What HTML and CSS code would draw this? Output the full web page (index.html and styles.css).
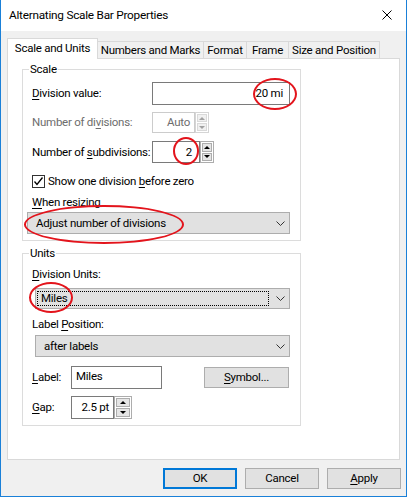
FILE: index.html
```html
<!DOCTYPE html>
<html>
<head>
<meta charset="utf-8">
<link rel="stylesheet" href="styles.css">
</head>
<body>
<div class="window">
  <div class="titlebar">
    <span class="title">Alternating Scale Bar Properties</span>
    <svg class="close" width="10" height="10" viewBox="0 0 10 10"><path d="M0.5 0.5 L9.5 9.5 M9.5 0.5 L0.5 9.5" stroke="#000" stroke-width="1" fill="none"/></svg>
  </div>
  <div class="client">
    <div class="tabs">
      <div class="tab active t1">Scale and Units</div>
      <div class="tab t2">Numbers and Marks</div>
      <div class="tab t3">Format</div>
      <div class="tab t4">Frame</div>
      <div class="tab t5">Size and Position</div>
    </div>
    <div class="panel">
      <fieldset class="group scale">
        <legend>Scale</legend>
        <div class="row r1">
          <label class="lbl"><u>D</u>ivision value:</label>
          <div class="edit wide">20 mi</div>
        </div>
        <div class="row r2">
          <label class="lbl disabled">Number of di<u>v</u>isions:</label>
          <div class="spinner">
            <div class="edit sp-edit e-dis">Auto</div>
            <div class="spin s-dis">
              <div class="sbtn"><span class="tri up"></span></div>
              <div class="sbtn"><span class="tri down"></span></div>
            </div>
          </div>
        </div>
        <div class="row r3">
          <label class="lbl">Number of <u>s</u>ubdivisions:</label>
          <div class="spinner">
            <div class="edit sp-edit e-sub">2</div>
            <div class="spin s-sub">
              <div class="sbtn"><span class="tri up"></span></div>
              <div class="sbtn"><span class="tri down"></span></div>
            </div>
          </div>
        </div>
        <div class="row r4">
          <span class="checkbox"><svg width="11" height="11" viewBox="0 0 11 11"><path d="M1.5 5.5 L4 8.5 L9.5 1.5" stroke="#000" stroke-width="1.3" fill="none"/></svg></span>
          <span class="cb-text">Show one division <u>b</u>efore zero</span>
        </div>
        <div class="line r5"><u>W</u>hen resizing</div>
        <div class="combo c1">
          <span>Adjust number of divisions</span>
          <svg class="chev" width="9" height="5" viewBox="0 0 9 5"><path d="M0.5 0.5 L4.5 4.5 L8.5 0.5" stroke="#333" stroke-width="1" fill="none"/></svg>
        </div>
      </fieldset>

      <fieldset class="group units">
        <legend>Units</legend>
        <div class="line u1"><u>D</u>ivision Units:</div>
        <div class="combo c2">
          <span class="focus">Miles</span>
          <svg class="chev" width="9" height="5" viewBox="0 0 9 5"><path d="M0.5 0.5 L4.5 4.5 L8.5 0.5" stroke="#333" stroke-width="1" fill="none"/></svg>
        </div>
        <div class="line u2">Label <u>P</u>osition:</div>
        <div class="combo c3">
          <span>after labels</span>
          <svg class="chev" width="9" height="5" viewBox="0 0 9 5"><path d="M0.5 0.5 L4.5 4.5 L8.5 0.5" stroke="#333" stroke-width="1" fill="none"/></svg>
        </div>
        <div class="row u3">
          <label class="lbl-s"><u>L</u>abel:</label>
          <div class="edit lab-edit">Miles</div>
          <div class="btn sym"><span><u>S</u>ymbol...</span></div>
        </div>
        <div class="row u4">
          <label class="lbl-s"><u>G</u>ap:</label>
          <div class="spinner">
            <div class="edit sp-edit e-gap">2.5 pt</div>
            <div class="spin s-gap">
              <div class="sbtn"><span class="tri up"></span></div>
              <div class="sbtn"><span class="tri down"></span></div>
            </div>
          </div>
        </div>
      </fieldset>

      <div class="ring ring1"></div>
      <div class="ring ring2"></div>
      <div class="ring ring3"></div>
      <div class="ring ring4"></div>
    </div>
    <div class="buttons">
      <div class="btn big ok">OK</div>
      <div class="btn big">Cancel</div>
      <div class="btn big"><span><u>A</u>pply</span></div>
    </div>
  </div>
</div>
</body>
</html>
```

FILE: styles.css
```css
* { box-sizing: border-box; }
html, body { margin: 0; padding: 0; background: #fff; }
body {
  font-family: "Roboto", "Noto Sans", sans-serif;
  font-size: 11.5px;
  letter-spacing: -0.25px;
  line-height: 15px;
  color: #000;
  white-space: nowrap;
}
u { text-decoration-thickness: 1px; text-underline-offset: 2px; }

.window {
  width: 407px;
  height: 497px;
  border: 1px solid #1a80d8;
  border-top: none;
  background: #f0f0f0;
  display: flex;
  flex-direction: column;
}
.titlebar {
  height: 31px;
  background: #fff;
  display: flex;
  align-items: center;
  justify-content: space-between;
  padding: 0 14px 1px 8px;
  font-size: 11.8px;
}
.close { display: block; }

.client {
  flex: 1;
  padding: 7px 0 0 6px;
  display: flex;
  flex-direction: column;
}
.tabs {
  display: flex;
  align-items: flex-end;
  height: 20px;
  position: relative;
  z-index: 1;
}
.tab {
  height: 17px;
  border: 1px solid #d9d9d9;
  border-bottom: none;
  margin-right: -1px;
  display: flex;
  align-items: center;
  justify-content: center;
  background: #f0f0f0;
  padding-top: 1px;
  flex: none;
}
.tab.active {
  height: 21px;
  margin-bottom: -1px;
  background: #fff;
  padding-top: 0;
  padding-bottom: 1px;
  position: relative;
}
.t1 { width: 91px; }
.t2 { width: 107px; }
.t3 { width: 44px; }
.t4 { width: 43px; }
.t5 { width: 92px; }

.panel {
  position: relative;
  width: 393px;
  height: 402px;
  border: 1px solid #d9d9d9;
  background: #fff;
  padding: 3px 0 0 14px;
}

.group {
  margin: 0;
  width: 279px;
  border: 1px solid #dcdcdc;
  padding: 0 0 0 9px;
  min-width: 0;
}
.group legend {
  padding: 0 1px;
  margin-left: -3px;
  line-height: 15px;
}
.scale { padding-bottom: 6px; }
.units { margin-top: 5px; padding-bottom: 6px; }

.row { display: flex; align-items: center; }
.line { display: block; line-height: 15px; height: 15px; }
.lbl { width: 120px; flex: none; }
.lbl-s { width: 39px; flex: none; }
.disabled { color: #6d6d6d; }

.r1 { margin-top: 5px; height: 23px; }
.r2 { margin-top: 7px; height: 21px; }
.r3 { margin-top: 8px; height: 22px; }
.r4 { margin-top: 11px; height: 15px; }
.r5 { margin-top: 6px; }

.edit {
  border: 1px solid #7a7a7a;
  background: #fff;
  height: 100%;
  display: flex;
  align-items: center;
  flex: none;
}
.wide { width: 138px; justify-content: flex-end; padding-right: 6px; }

.spinner { display: flex; height: 100%; }
.sp-edit { justify-content: flex-end; padding-right: 3px; }
.e-dis { width: 43px; border-color: #cccccc; color: #6d6d6d; padding-right: 4px; }
.e-sub { width: 48px; padding-right: 7px; }
.e-gap { width: 43px; padding-right: 4px; }

.spin {
  display: flex;
  flex-direction: column;
  border: 1px solid #adadad;
  background: #fff;
  padding: 1px;
  gap: 1px;
}
.s-dis { width: 14px; border-color: #d5d5d5; }
.s-sub { width: 14px; }
.s-gap { width: 18px; }
.sbtn {
  flex: 1;
  background: #e5e5e5;
  border: 1px solid #adadad;
  display: flex;
  align-items: center;
  justify-content: center;
}
.s-dis .sbtn { background: #f0f0f0; border-color: #d9d9d9; }
.tri { width: 0; height: 0; border-left: 3px solid transparent; border-right: 3px solid transparent; }
.tri.up { border-bottom: 3px solid #000; }
.tri.down { border-top: 3px solid #000; }
.s-dis .tri.up { border-bottom-color: #a0a0a0; }
.s-dis .tri.down { border-top-color: #a0a0a0; }

.checkbox {
  width: 13px;
  height: 13px;
  border: 1px solid #333;
  background: #fff;
  display: flex;
  align-items: center;
  justify-content: center;
  margin-right: 3px;
}
.checkbox svg { display: block; }

.combo {
  display: flex;
  align-items: center;
  justify-content: space-between;
  background: #e1e1e1;
  border: 1px solid #adadad;
  padding: 0 4px 0 8px;
}
.chev { display: block; }
.c1 { margin-top: 2px; height: 22px; width: 263px; margin-left: -5px; }
.c2 { margin-top: 6px; height: 21px; width: 255px; margin-left: 3px; padding-left: 1px; }
.c3 { margin-top: 3px; height: 22px; width: 255px; margin-left: 3px; }

.focus {
  width: 232px;
  height: 15px;
  border: 1px dotted #000;
  display: flex;
  align-items: center;
  padding-left: 3px;
}

.u1 { margin-top: 6px; }
.u2 { margin-top: 8px; }
.u3 { margin-top: 9px; height: 23px; }
.u4 { margin-top: 7px; height: 23px; }
.lab-edit { width: 91px; padding-left: 4px; align-items: flex-start; padding-top: 2px; }

.btn {
  background: #e1e1e1;
  border: 1px solid #adadad;
  display: flex;
  align-items: center;
  justify-content: center;
}
.sym { width: 85px; height: 21px; margin-left: 42px; }

.buttons {
  display: flex;
  justify-content: flex-end;
  gap: 8px;
  margin-top: 8px;
  padding-right: 5px;
}
.big { width: 74px; height: 21px; }
.ok { border: 2px solid #0078d7; }

.ring {
  position: absolute;
  border: 2.5px solid #e3141c;
  border-radius: 50%;
}
.ring1 { left: 245px; top: 19px; width: 44px; height: 32px; }
.ring2 { left: 165px; top: 78px; width: 26px; height: 28px; }
.ring3 { left: 16px; top: 146px; width: 160px; height: 39px; }
.ring4 { left: 21px; top: 223px; width: 44px; height: 31px; }
```
